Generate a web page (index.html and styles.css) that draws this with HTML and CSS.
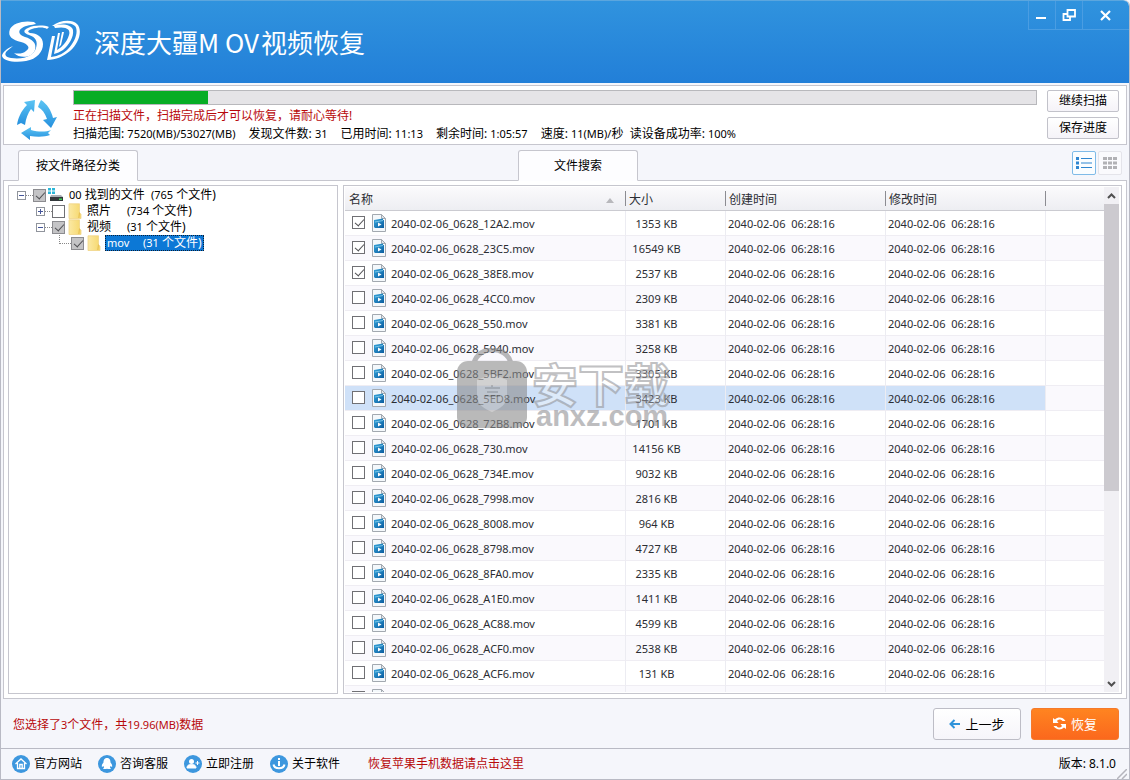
FILE: index.html
```html
<!DOCTYPE html>
<html lang="zh-CN">
<head>
<meta charset="utf-8">
<title>深度大疆MOV视频恢复</title>
<link rel="stylesheet" href="styles.css">
</head>
<body>
<svg class="defs" aria-hidden="true">
  <defs>
    <linearGradient id="g-blue" x1="0" y1="0" x2="0" y2="1"><stop offset="0" stop-color="#5cc4f3"/><stop offset="1" stop-color="#2590de"/></linearGradient>
    <linearGradient id="g-mov" x1="0" y1="0" x2="1" y2="1"><stop offset="0" stop-color="#35a5dc"/><stop offset="1" stop-color="#0b5c9e"/></linearGradient>
    <linearGradient id="g-folder" x1="0" y1="0" x2="1" y2="0"><stop offset="0" stop-color="#fbe9a4"/><stop offset="1" stop-color="#f6d86d"/></linearGradient>
    <symbol id="mov" viewBox="0 0 14 18">
      <path d="M.5 .5H9.500L13.500 4.500V17.500H.5Z" fill="#f4f8fb" stroke="#a3a9b0"/>
      <path d="M9.500 .5V4.500H13.500Z" fill="#dfe4e9" stroke="#a3a9b0"/>
      <path d="M2 6L11 4.500V6H12V14H3L2 13Z" fill="url(#g-mov)"/>
      <path d="M3 8L11 6.500" stroke="#8fd3ef" stroke-width=".8" fill="none"/>
      <path d="M6 8.500L9.500 10.500L6 12.500Z" fill="#fff"/>
    </symbol>
    <symbol id="folder" viewBox="0 0 14 16">
      <path d="M1 .8H11.500V10L13 11V15.500H1Z" fill="url(#g-folder)" stroke="#f0d488" stroke-width=".8"/>
      <path d="M11.500 9.500L10.800 15" fill="none" stroke="#e6be4f"/>
    </symbol>
  </defs>
</svg>

<header class="titlebar">
  <svg class="logo" viewBox="0 0 80 44" fill="#fff" aria-hidden="true">
    <path d="M33 2C23 0 12 3 9 9C6 17 12 20 20 22C27 24 30 28 25 31C22 34 16 34 13 33C19 39 31 38 34 30C36 23 31 19 24 17C17 15 17 10 21 8C25 5 31 5 35 4Z"/>
    <path d="M48 7C43 5 33 5 27 8C22 10 22 13 28 15C35 17 37 22 35 28C33 35 24 40 10 38C4 37 3 34 6 31C8 29 10 28 12 26C6 28 1 33 1 36C2 41 14 43 25 41C36 39 42 32 42 24C42 17 36 13 29 13C26 12 27 10 31 9C37 7 43 7 46 9Z"/>
    <path d="M51 6C59 0 71 -1 76 4C82 10 78 23 69 31C63 36 55 40 46 40L51 16H54L50 37C58 36 63 33 67 29C74 22 78 11 74 6C69 2 60 3 54 6Z"/>
    <path d="M53 6C61 3 71 5 72 10C73 17 68 25 62 30C59 32 56 33 53 34L57 13H59L56 30C61 27 66 22 68 15C70 9 65 6 54 8Z"/>
    <path d="M61 12H63L60 25L58 27Z"/>
  </svg>
  <h1>深度大疆M OV<span>视频恢复</span></h1>
  <div class="winctl">
    <button type="button" aria-label="最小化"><svg width="14" height="14" viewBox="0 0 14 14"><path d="M1 10H11" stroke="#fff" stroke-width="2"/></svg></button>
    <button type="button" aria-label="还原"><svg width="14" height="14" viewBox="0 0 14 14" fill="none" stroke="#fff" stroke-width="1.800"><path d="M5.500 2H13V8.500H5.500Z"/><path d="M5 6H1.500V12H8V9"/></svg></button>
    <button type="button" class="close" aria-label="关闭"><svg width="14" height="14" viewBox="0 0 14 14"><path d="M2 3L11 12M11 3L2 12" stroke="#fff" stroke-width="2.200"/></svg></button>
  </div>
</header>

<section class="scan">
  <svg class="recycle" viewBox="0 0 42 42" aria-hidden="true" fill="url(#g-blue)">
    <path d="M8 3L19 1L18 13L15 10C12 14 10 19 9 26L5 24L1 26C2 19 5 12 11 6Z"/>
    <path d="M23 5L25 1C31 5 35 11 37 19L41 18L35 29L27 21L31 20C29 14 26 10 22 8Z"/>
    <path d="M35 31C30 33 22 33 15 31L15 28L5 34L14 41L14 37C21 38 29 38 34 36L32 34Z"/>
  </svg>
  <div class="scan-info">
    <div class="progress" role="progressbar" aria-label="扫描进度" aria-valuenow="14" aria-valuemin="0" aria-valuemax="100"><div class="bar" style="width:13.9%"></div></div>
    <p class="warn">正在扫描文件，扫描完成后才可以恢复，请耐心等待!</p>
    <p class="stats"><span>扫描范围: <b>7520(MB)/53027(MB)</b></span><span>发现文件数: <b>31</b></span><span>已用时间: <b>11:13</b></span><span>剩余时间: <b>1:05:57</b></span><span>速度: <b>11(MB)/</b>秒&nbsp; 读设备成功率: <b>100%</b></span></p>
  </div>
  <div class="scan-actions">
    <button type="button">继续扫描</button>
    <button type="button">保存进度</button>
  </div>
</section>

<nav class="tabs">
  <button type="button" class="tab active">按文件路径分类</button>
  <button type="button" class="tab search">文件搜索</button>
  <div class="views">
    <button type="button" class="on" aria-label="列表"><svg width="16" height="12" viewBox="0 0 16 12"><path d="M0 0h3v3H0zM0 4.500h3v3H0zM0 9h3v3H0z" fill="#2f86d0"/><path d="M5 1.500H16M5 6H16M5 10.500H16" stroke="#2f86d0"/></svg></button>
    <button type="button" aria-label="图标"><svg width="14" height="12" viewBox="0 0 14 12"><path d="M0 0h4v3H0zM5 0h4v3H5zM10 0h4v3h-4zM0 4.500h4v3H0zM5 4.500h4v3H5zM10 4.500h4v3h-4zM0 9h4v3H0zM5 9h4v3H5zM10 9h4v3h-4z" fill="#b1b1b5"/></svg></button>
  </div>
</nav>

<main class="work">
  <div class="tree">
    <div class="node"><button type="button" class="exp" aria-label="折叠"></button><i class="dots"></i><label><input type="checkbox" class="gray" checked>
      <svg width="16" height="14" viewBox="0 0 16 14"><path d="M0 0h3v2.500H0zM4 0h3v2.500H4zM0 3.500h3V6H0zM4 3.500h3V6H4z" fill="#2bb7d9"/><path d="M3 7H13L15 9V13H2V9Z" fill="#a9b0b5"/><path d="M2 9H15V13H2Z" fill="#33383b"/><path d="M11 10.500h3v1.500h-3z" fill="#3fd45c"/></svg>
      <span><b>00</b> 找到的文件&nbsp; <b>(765</b> 个文件)</span></label></div>
    <div class="node l1"><button type="button" class="exp plus" aria-label="展开"></button><i class="dots"></i><label><input type="checkbox"><svg width="14" height="16"><use href="#folder"/></svg><span class="cat">照片</span><span><b>(734</b> 个文件)</span></label></div>
    <div class="node l1"><button type="button" class="exp" aria-label="折叠"></button><i class="dots"></i><label><input type="checkbox" class="gray" checked><svg width="14" height="16"><use href="#folder"/></svg><span class="cat">视频</span><span><b>(31</b> 个文件)</span></label></div>
    <div class="node l2"><i class="elbow"></i><label><input type="checkbox" class="gray" checked><svg width="14" height="16"><use href="#folder"/></svg><span class="sel"><span class="mv"><b>mov</b></span><span><b>(31</b> 个文件)</span></span></label></div>
  </div>

  <div class="list">
    <div class="viewport">
      <table>
        <colgroup><col class="c-name"><col class="c-size"><col class="c-date"><col class="c-date"><col></colgroup>
        <thead><tr><th>名称<svg class="sort" width="8" height="5" viewBox="0 0 8 5"><path d="M0 5L4 0L8 5Z" fill="#b8b8bc"/></svg></th><th>大小</th><th>创建时间</th><th>修改时间</th><th></th></tr></thead>
        <tbody>
<tr><td><label><input type="checkbox" checked><svg><use href="#mov"/></svg>2040-02-06_0628_12A2.mov</label></td><td>1353 KB</td><td>2040-02-06&nbsp; 06:28:16</td><td>2040-02-06&nbsp; 06:28:16</td><td></td></tr>
<tr><td><label><input type="checkbox" checked><svg><use href="#mov"/></svg>2040-02-06_0628_23C5.mov</label></td><td>16549 KB</td><td>2040-02-06&nbsp; 06:28:16</td><td>2040-02-06&nbsp; 06:28:16</td><td></td></tr>
<tr><td><label><input type="checkbox" checked><svg><use href="#mov"/></svg>2040-02-06_0628_38E8.mov</label></td><td>2537 KB</td><td>2040-02-06&nbsp; 06:28:16</td><td>2040-02-06&nbsp; 06:28:16</td><td></td></tr>
<tr><td><label><input type="checkbox"><svg><use href="#mov"/></svg>2040-02-06_0628_4CC0.mov</label></td><td>2309 KB</td><td>2040-02-06&nbsp; 06:28:16</td><td>2040-02-06&nbsp; 06:28:16</td><td></td></tr>
<tr><td><label><input type="checkbox"><svg><use href="#mov"/></svg>2040-02-06_0628_550.mov</label></td><td>3381 KB</td><td>2040-02-06&nbsp; 06:28:16</td><td>2040-02-06&nbsp; 06:28:16</td><td></td></tr>
<tr><td><label><input type="checkbox"><svg><use href="#mov"/></svg>2040-02-06_0628_5940.mov</label></td><td>3258 KB</td><td>2040-02-06&nbsp; 06:28:16</td><td>2040-02-06&nbsp; 06:28:16</td><td></td></tr>
<tr><td><label><input type="checkbox"><svg><use href="#mov"/></svg>2040-02-06_0628_5BF2.mov</label></td><td>3305 KB</td><td>2040-02-06&nbsp; 06:28:16</td><td>2040-02-06&nbsp; 06:28:16</td><td></td></tr>
<tr class="current"><td><label><input type="checkbox"><svg><use href="#mov"/></svg>2040-02-06_0628_5ED8.mov</label></td><td>3423 KB</td><td>2040-02-06&nbsp; 06:28:16</td><td>2040-02-06&nbsp; 06:28:16</td><td></td></tr>
<tr><td><label><input type="checkbox"><svg><use href="#mov"/></svg>2040-02-06_0628_72B8.mov</label></td><td>1701 KB</td><td>2040-02-06&nbsp; 06:28:16</td><td>2040-02-06&nbsp; 06:28:16</td><td></td></tr>
<tr><td><label><input type="checkbox"><svg><use href="#mov"/></svg>2040-02-06_0628_730.mov</label></td><td>14156 KB</td><td>2040-02-06&nbsp; 06:28:16</td><td>2040-02-06&nbsp; 06:28:16</td><td></td></tr>
<tr><td><label><input type="checkbox"><svg><use href="#mov"/></svg>2040-02-06_0628_734E.mov</label></td><td>9032 KB</td><td>2040-02-06&nbsp; 06:28:16</td><td>2040-02-06&nbsp; 06:28:16</td><td></td></tr>
<tr><td><label><input type="checkbox"><svg><use href="#mov"/></svg>2040-02-06_0628_7998.mov</label></td><td>2816 KB</td><td>2040-02-06&nbsp; 06:28:16</td><td>2040-02-06&nbsp; 06:28:16</td><td></td></tr>
<tr><td><label><input type="checkbox"><svg><use href="#mov"/></svg>2040-02-06_0628_8008.mov</label></td><td>964 KB</td><td>2040-02-06&nbsp; 06:28:16</td><td>2040-02-06&nbsp; 06:28:16</td><td></td></tr>
<tr><td><label><input type="checkbox"><svg><use href="#mov"/></svg>2040-02-06_0628_8798.mov</label></td><td>4727 KB</td><td>2040-02-06&nbsp; 06:28:16</td><td>2040-02-06&nbsp; 06:28:16</td><td></td></tr>
<tr><td><label><input type="checkbox"><svg><use href="#mov"/></svg>2040-02-06_0628_8FA0.mov</label></td><td>2335 KB</td><td>2040-02-06&nbsp; 06:28:16</td><td>2040-02-06&nbsp; 06:28:16</td><td></td></tr>
<tr><td><label><input type="checkbox"><svg><use href="#mov"/></svg>2040-02-06_0628_A1E0.mov</label></td><td>1411 KB</td><td>2040-02-06&nbsp; 06:28:16</td><td>2040-02-06&nbsp; 06:28:16</td><td></td></tr>
<tr><td><label><input type="checkbox"><svg><use href="#mov"/></svg>2040-02-06_0628_AC88.mov</label></td><td>4599 KB</td><td>2040-02-06&nbsp; 06:28:16</td><td>2040-02-06&nbsp; 06:28:16</td><td></td></tr>
<tr><td><label><input type="checkbox"><svg><use href="#mov"/></svg>2040-02-06_0628_ACF0.mov</label></td><td>2538 KB</td><td>2040-02-06&nbsp; 06:28:16</td><td>2040-02-06&nbsp; 06:28:16</td><td></td></tr>
<tr><td><label><input type="checkbox"><svg><use href="#mov"/></svg>2040-02-06_0628_ACF6.mov</label></td><td>131 KB</td><td>2040-02-06&nbsp; 06:28:16</td><td>2040-02-06&nbsp; 06:28:16</td><td></td></tr>
<tr><td><label><input type="checkbox" aria-label="文件"><svg><use href="#mov"/></svg></label></td><td></td><td></td><td></td><td></td></tr>
        </tbody>
      </table>
    </div>
    <div class="scrollbar">
      <button type="button" aria-label="向上"><svg width="9" height="6" viewBox="0 0 9 6"><path d="M1 5L4.500 1.500L8 5" fill="none" stroke="#505050" stroke-width="2"/></svg></button>
      <div class="track"><div class="thumb"></div></div>
      <button type="button" aria-label="向下"><svg width="9" height="6" viewBox="0 0 9 6"><path d="M1 1L4.500 4.500L8 1" fill="none" stroke="#505050" stroke-width="2"/></svg></button>
    </div>
    <div class="mark">
      <svg width="70" height="80" viewBox="0 0 70 80" aria-hidden="true">
        <path d="M17 15C22 -3 49 -3 54 15" fill="none" stroke="#8c8c8c" stroke-width="5"/>
        <rect x="0" y="13" width="70" height="67" rx="11" fill="#8c8c8c"/>
        <path d="M20 32L35 26L50 32V48C50 57 42 61 35 64C28 61 20 57 20 48Z" fill="#b4b4b4"/>
        <path d="M28 40H43M30 44H41M28 48H43M35 37V40" stroke="#868686" stroke-width="2"/>
      </svg>
      <div class="mark-text"><span class="cn">安下载</span><span class="en">anxz.com</span></div>
    </div>
  </div>
</main>

<section class="actions">
  <p class="warn">您选择了<b>3</b>个文件，共<b>19.96(MB)</b>数据</p>
  <button type="button" class="back"><svg width="11" height="10" viewBox="0 0 11 10"><path d="M11 5H2M5.500 1L1.500 5L5.500 9" fill="none" stroke="#2f93da" stroke-width="2"/></svg>上一步</button>
  <button type="button" class="restore"><svg width="13" height="13" viewBox="0 0 13 13"><path d="M0 6V1L2 2.500C5 -.5 10 0 12.500 4H9.500C8 2 5.500 2 4 4L5.500 6ZM13 7V12L11 10.500C8 13.500 3 13 .5 9H3.500C5 11 7.500 11 9 9L7.500 7Z" fill="#fff"/></svg>恢复</button>
</section>

<footer class="status">
  <a href="#"><svg viewBox="0 0 18 18"><circle cx="9" cy="9" r="9" fill="#3d97de"/><path d="M3.500 9L9 4L14.500 9M5.500 8V13.500H12.500V8M7.800 13V9.500H10.200V13" fill="none" stroke="#fff" stroke-width="1.300"/></svg>官方网站</a>
  <a href="#"><svg viewBox="0 0 18 18"><circle cx="9" cy="9" r="9" fill="#3d97de"/><path d="M9 3C6 3 5.500 5.500 5.500 7.500C4 9 3.500 11 4 12L5.500 11L6 12.500L5 14H8.500L9 13.500L9.500 14H13L12 12.500L12.500 11L14 12C14.500 11 14 9 12.500 7.500C12.500 5.500 12 3 9 3Z" fill="#fff"/></svg>咨询客服</a>
  <a href="#"><svg viewBox="0 0 18 18"><circle cx="9" cy="9" r="9" fill="#3d97de"/><circle cx="7.500" cy="6.500" r="2.500" fill="#fff"/><path d="M3 13C3 9.500 6 9.500 7.500 9.500S12 9.500 12 13ZM11.500 8H15.500M13.500 6V10" fill="#fff" stroke="#fff"/></svg>立即注册</a>
  <a href="#"><svg viewBox="0 0 18 18"><circle cx="9" cy="9" r="9" fill="#3d97de"/><path d="M9 3V5M9 6V11M3.500 9.500C4.500 14.500 13.500 14.500 14.500 9.500" fill="none" stroke="#fff" stroke-width="2"/></svg>关于软件</a>
  <a href="#" class="promo">恢复苹果手机数据请点击这里</a>
  <span class="version">版本: 8.1.0</span>
  <svg class="grip" width="10" height="10" viewBox="0 0 10 10"><path d="M0 10L10 0M5 10L10 5" stroke="#b4b4bc" stroke-width="1.500"/></svg>
</footer>
</body>
</html>
```

FILE: styles.css
```css
* { box-sizing: border-box; }

body {
  margin: 0;
  height: 100vh;
  display: flex;
  flex-direction: column;
  overflow: hidden;
  background: #f5f6fb;
  border: solid #b9bac4;
  border-width: 0 1px;
  border-top-right-radius: 6px;
  color: #000;
  font: 12px/16px "Noto Sans", "Noto Sans CJK SC", sans-serif;
}

button { font: inherit; color: inherit; padding: 0; margin: 0; cursor: pointer; }
p, h1 { margin: 0; }
b { font-weight: 400; font-size: 11px; }
svg { flex: none; }
.defs { position: absolute; width: 0; height: 0; }
.warn { color: #b8090b; }

/* Title bar */
.titlebar {
  flex: none;
  height: 83px;
  display: flex;
  align-items: center;
  background: linear-gradient(#3093de, #227fd8);
  border-top: 1px solid #5ba6de;
  border-top-right-radius: 6px;
}
.logo { width: 80px; height: 44px; margin-right: 13px; }
.titlebar h1 { display: flex; gap: 2px; font: 400 26px/36px "Noto Sans CJK SC", sans-serif; color: #fff; }
.winctl { margin-left: auto; align-self: flex-start; display: flex; height: 29px; }
.winctl button {
  width: 27px;
  display: flex;
  align-items: center;
  justify-content: center;
  background: none;
  border: 0;
  border-left: 1px solid #4a9de2;
  border-bottom: 1px solid #4a9de2;
}
.winctl .close { width: 47px; }

/* Scan progress */
.scan {
  flex: none;
  display: flex;
  margin: 2px 2px 0;
  height: 60px;
  padding: 4px 7px 0 12px;
  background: #fff;
  border: 1px solid #c6c6ce;
}
.recycle { width: 42px; height: 42px; margin: 9px 15px 0 0; }
.scan-info { flex: 1; min-width: 0; }
.progress { height: 15px; background: #e5e4e7; border: 1px solid #b8b8bc; }
.bar { height: 100%; background: #07ad25; }
.scan-info .warn { line-height: 18px; margin-top: 2px; }
.stats { display: flex; gap: 13px; line-height: 18px; white-space: nowrap; }
.scan-actions { display: flex; flex-direction: column; gap: 5px; margin-left: 10px; }
.scan-actions button {
  width: 72px;
  height: 22px;
  background: linear-gradient(#fff, #f5f3f8);
  border: 1px solid #c2c2ca;
  border-radius: 2px;
}

/* Tabs */
.tabs { flex: none; display: flex; height: 35px; padding: 5px 7px 0 17px; }
.tab {
  width: 120px;
  height: 31px;
  position: relative;
  background: #fdfdff;
  border: 1px solid #c6c6ce;
  border-bottom-color: transparent;
  border-radius: 3px 3px 0 0;
}
.tab.active { z-index: 1; border-bottom-color: #fdfdff; }
.tab.search { margin-left: 380px; }
.views { margin-left: auto; display: flex; gap: 2px; padding-top: 1px; }
.views button {
  width: 24px;
  height: 24px;
  display: flex;
  align-items: center;
  justify-content: center;
  background: #fafafd;
  border: 1px solid #e4e4ea;
  border-radius: 2px;
}
.views .on { border-color: #7fbbe8; background: #fafdff; }

/* Work area */
.work {
  flex: 1;
  min-height: 0;
  display: flex;
  gap: 5px;
  margin: 0 2px;
  padding: 4px;
  background: #fff;
  border: 1px solid #c6c6ce;
}
.tree { flex: none; width: 330px; padding: 1px 8px; border: 1px solid #c6c6ce; }
.node { display: flex; align-items: center; height: 16px; white-space: nowrap; }
.node label { display: flex; align-items: center; }
.node.l1 { padding-left: 19px; }
.node.l2 { padding-left: 42px; }
.node label svg { margin: 0 5px 0 2px; }
.node.l1 label svg, .node.l2 label svg { margin-left: 3px; }
.exp {
  position: relative;
  width: 9px;
  height: 9px;
  background: #fff;
  border: 1px solid #90949c;
}
.exp::before { content: ""; position: absolute; left: 1px; right: 1px; top: 3px; height: 1px; background: #44559a; }
.exp.plus::after { content: ""; position: absolute; top: 1px; bottom: 1px; left: 3px; width: 1px; background: #44559a; }
.dots { width: 7px; border-top: 1px dotted #888; }
.elbow { width: 12px; height: 9px; align-self: flex-start; border-left: 1px dotted #888; border-bottom: 1px dotted #888; }
.node .cat { width: 40px; }
.sel {
  display: flex;
  height: 16px;
  line-height: 14px;
  padding: 0 1px;
  margin-left: -1px;
  background: #0c78d6;
  color: #fff;
  border: 1px dotted #0b2038;
}
.mv { width: 36px; }

/* Checkboxes */
input[type="checkbox"] {
  appearance: none;
  flex: none;
  position: relative;
  width: 13px;
  height: 13px;
  margin: 0;
  background: #fff;
  border: 1px solid #707074;
}
input:checked::after {
  content: "";
  position: absolute;
  left: 4px;
  top: 0;
  width: 4px;
  height: 8px;
  border: solid #505054;
  border-width: 0 1px 1px 0;
  transform: rotate(42deg);
}
input.gray { background: #c4c4c6; border-color: #8c8c90; }

/* File list */
.list {
  flex: 1;
  min-width: 0;
  position: relative;
  display: flex;
  padding: 1px 2px 1px 1px;
  border: 1px solid #c6c6ce;
}
.viewport { flex: 1; min-width: 0; overflow: hidden; }
table { width: 100%; table-layout: fixed; border-collapse: separate; border-spacing: 0; color: #2b2d33; }
.c-name { width: 281px; }
.c-size { width: 100px; }
.c-date { width: 160px; }
th {
  height: 24px;
  padding: 2px 3px 0;
  text-align: left;
  font-weight: 400;
  background:
    linear-gradient(#8c8c92, #8c8c92) right 0 top 4px / 1px 15px no-repeat,
    linear-gradient(#fbfafc, #edeef2);
  border-bottom: 1px solid #cbcbd1;
}
th:first-child { padding-right: 12px; padding-left: 4px; }
th:last-child { background: linear-gradient(#fbfafc, #edeef2); }
.sort { float: right; margin-top: 6px; }
td {
  height: 25px;
  padding: 2px 3px 0 2px;
  font-size: 11px;
  white-space: nowrap;
  border-right: 1px solid #ececf2;
  border-bottom: 1px solid #efedf3;
}
td:first-child { padding-left: 7px; }
td:nth-child(2) { text-align: center; padding-right: 40px; }
td:last-child { border-right: 0; }
tbody tr:nth-child(even) td { background: #faf9fd; }
tbody tr.current td:not(:last-child) { background: #cfe1f8; }
td label { display: flex; align-items: center; height: 22px; }
td svg { width: 14px; height: 18px; margin: 0 5px 2px 7px; }
td input[type="checkbox"] { margin-bottom: 3px; }

.scrollbar { flex: none; width: 15px; display: flex; flex-direction: column; background: #f1f0f4; }
.scrollbar button { height: 17px; background: none; border: 0; display: flex; align-items: center; justify-content: center; }
.track { flex: 1; }
.thumb { height: 61%; background: #cccacf; }

.mark {
  position: absolute;
  left: 113px;
  top: 162px;
  display: flex;
  gap: 5px;
  opacity: .6;
  pointer-events: none;
}
.mark-text { display: flex; flex-direction: column; padding-top: 10px; }
.cn {
  font: 700 46px/48px "Noto Sans CJK SC", sans-serif;
  color: #ffffff80;
  -webkit-text-stroke: 2px #98989c;
}
.en { font: 700 29px/20px "Liberation Sans", sans-serif; color: #929296; padding-left: 4px; }

/* Actions */
.actions { flex: none; display: flex; align-items: center; height: 49px; padding: 0 10px 0 12px; }
.actions .warn { padding-top: 2px; }
.actions .back { margin-left: auto; }
.actions button {
  display: flex;
  align-items: center;
  justify-content: center;
  gap: 5px;
  width: 88px;
  height: 32px;
  font-size: 13px;
  background: linear-gradient(#fff, #f6f5fa);
  border: 1px solid #bdbdc6;
  border-radius: 3px;
}
.actions .restore { margin-left: 10px; color: #fff; background: linear-gradient(#ff8420, #fb681d); border-color: #f57a2b; }

/* Status bar */
.status {
  flex: none;
  display: flex;
  align-items: center;
  height: 32px;
  padding: 0 2px 0 11px;
  border-top: 1px solid #b9bac4;
  border-bottom: 1px solid #b9bac4;
}
.status a { display: flex; align-items: center; color: #000; text-decoration: none; margin-right: 16px; }
.status a svg { width: 18px; height: 18px; margin-right: 4px; }
.status a.promo { color: #b8090b; margin-left: 12px; }
.version { margin-left: auto; }
.grip { align-self: flex-end; margin-left: 1px; }
```
